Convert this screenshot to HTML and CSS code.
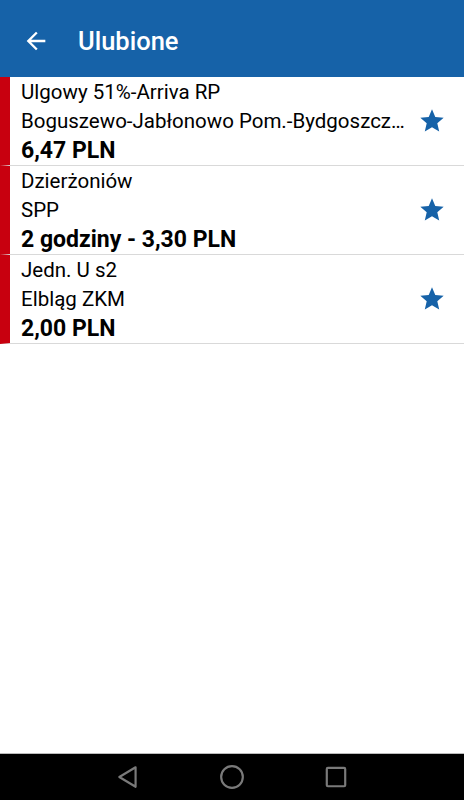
FILE: index.html
```html
<!DOCTYPE html>
<html lang="pl">
<head>
  <meta charset="UTF-8">
  <title>Ulubione</title>
  <link rel="stylesheet" href="styles.css">
</head>
<body>

  <div class="app">
    <header class="toolbar">
      <svg class="back" viewBox="0 0 24 24" width="28" height="28">
        <path d="M20 11H7.83l5.59-5.59L12 4l-8 8 8 8 1.41-1.41L7.83 13H20v-2z" fill="#fff"/>
      </svg>
      <h1>Ulubione</h1>
    </header>

    <ul class="list">
      <li class="item">
        <div class="text">
          <p>Ulgowy 51%-Arriva RP</p>
          <p>Boguszewo-Jabłonowo Pom.-Bydgoszcz…</p>
          <p class="price">6,47 PLN</p>
        </div>
        <svg class="star" viewBox="0 0 24 24" width="28" height="28">
          <path d="M12 17.27L18.18 21l-1.64-7.03L22 9.24l-7.19-.61L12 2 9.19 8.63 2 9.24l5.46 4.73L5.82 21z"/>
        </svg>
      </li>
      <li class="item">
        <div class="text">
          <p>Dzierżoniów</p>
          <p>SPP</p>
          <p class="price">2 godziny - 3,30 PLN</p>
        </div>
        <svg class="star" viewBox="0 0 24 24" width="28" height="28">
          <path d="M12 17.27L18.18 21l-1.64-7.03L22 9.24l-7.19-.61L12 2 9.19 8.63 2 9.24l5.46 4.73L5.82 21z"/>
        </svg>
      </li>
      <li class="item">
        <div class="text">
          <p>Jedn. U s2</p>
          <p>Elbląg ZKM</p>
          <p class="price">2,00 PLN</p>
        </div>
        <svg class="star" viewBox="0 0 24 24" width="28" height="28">
          <path d="M12 17.27L18.18 21l-1.64-7.03L22 9.24l-7.19-.61L12 2 9.19 8.63 2 9.24l5.46 4.73L5.82 21z"/>
        </svg>
      </li>
    </ul>

    <nav class="navbar">
      <svg viewBox="0 0 24 24" width="26" height="26">
        <path d="M19 3 L4 12 L19 21 Z" fill="none" stroke="#7a7a7a" stroke-width="2" stroke-linejoin="round"/>
      </svg>
      <svg viewBox="0 0 24 24" width="26" height="26">
        <circle cx="12" cy="12" r="10" fill="none" stroke="#7a7a7a" stroke-width="2"/>
      </svg>
      <svg viewBox="0 0 24 24" width="26" height="26">
        <rect x="3.5" y="3.5" width="17" height="17" rx="1" fill="none" stroke="#7a7a7a" stroke-width="2"/>
      </svg>
    </nav>
  </div>

</body>
</html>
```

FILE: styles.css
```css
body {
  margin: 0;
  font-family: Roboto, "Noto Sans", sans-serif;
  background-color: #fff;
  color: #000;
}

.app {
  width: 464px;
  height: 800px;
  display: flex;
  flex-direction: column;
}

.toolbar {
  height: 77px;
  box-sizing: border-box;
  padding-top: 5px;
  background-color: #1662a8;
  display: flex;
  align-items: center;
  padding-left: 22px;
  gap: 28px;
}

.toolbar h1 {
  margin: 0;
  color: #fff;
  font-size: 25.5px;
  font-weight: 500;
}

.list {
  list-style: none;
  margin: 0;
  padding: 0;
  flex: 1;
}

.item {
  display: flex;
  align-items: center;
  border-left: 10px solid #c8000f;
  border-bottom: 1px solid #d9d9d9;
  height: 88px;
  padding-left: 11px;
  padding-right: 18px;
}

.text {
  flex: 1;
  min-width: 0;
}

.text p {
  margin: 0;
  font-size: 20.5px;
  line-height: 29px;
  white-space: nowrap;
}

.text p.price {
  font-size: 23px;
  font-weight: bold;
}

.star {
  fill: #1662a8;
  flex-shrink: 0;
  margin-left: 4px;
}

.navbar {
  height: 46px;
  background-color: #000;
  border-top: 1px solid #bbb;
  display: flex;
  justify-content: center;
  align-items: center;
  gap: 78px;
}
```
